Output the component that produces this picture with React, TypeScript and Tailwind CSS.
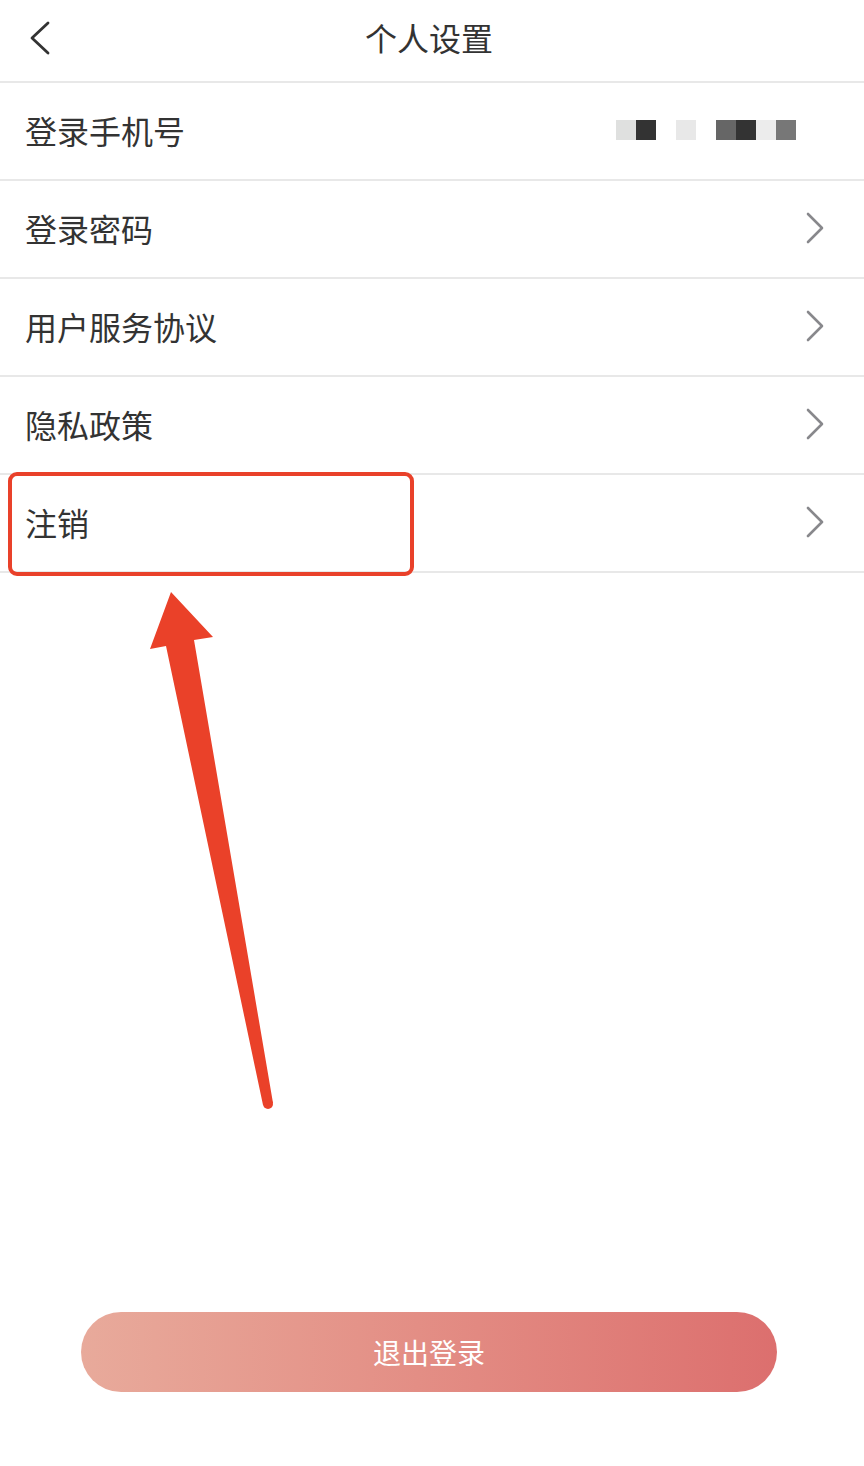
import { ReactNode } from 'react';

const FONT = "font-['Noto_Sans_CJK_SC','Noto_Sans',sans-serif]";

/** Right-pointing chevron used on tappable rows. */
function Chevron() {
  return (
    <svg width="22" height="34" viewBox="0 0 22 34" className="shrink-0">
      <path d="M4 3 L18 17 L4 31" fill="none" stroke="#88888c" strokeWidth="2.6" strokeLinecap="round" strokeLinejoin="round" />
    </svg>
  );
}

/** Pixelated (masked) phone number. */
function MaskedPhone() {
  const blocks = ['#dfe0df', '#333333', 'transparent', '#e8e8e8', 'transparent', '#666666', '#333333', '#ececec', '#777777'];
  return (
    <div className="mr-[30px] flex">
      {blocks.map((c, i) => (
        <span key={i} className="h-5 w-5" style={{ backgroundColor: c }} />
      ))}
    </div>
  );
}

function Row({ label, right }: { label: string; right?: ReactNode }) {
  return (
    <div className="flex h-[98px] items-center justify-between border-b-2 border-[#e8e8e8] pb-[3px] pl-[25px] pr-[38px]">
      <span className="text-[32px] leading-none text-[#333]">{label}</span>
      {right ?? <Chevron />}
    </div>
  );
}

export default function App() {
  return (
    <div className={`relative min-h-[1466px] w-[864px] bg-white ${FONT}`}>
      <header className="relative flex h-[83px] items-center justify-center border-b-2 border-[#e8e8e8] pb-[8px]">
        <svg width="24" height="36" viewBox="0 0 24 36" className="absolute left-[28px] top-[20px]">
          <path d="M20 3 L4 18 L20 33" fill="none" stroke="#333" strokeWidth="2.8" strokeLinecap="round" strokeLinejoin="round" />
        </svg>
        <h1 className="mr-[6px] text-[32px] leading-none text-[#333]">个人设置</h1>
      </header>

      <Row label="登录手机号" right={<MaskedPhone />} />
      <Row label="登录密码" />
      <Row label="用户服务协议" />
      <Row label="隐私政策" />
      <Row label="注销" />

      <div className="mt-[739px] pl-[81px]">
        <button
          type="button"
          className="h-[80px] w-[696px] rounded-full bg-gradient-to-r from-[#e8aa9b] to-[#dc6f6e] text-[28px] text-white"
        >
          退出登录
        </button>
      </div>

      {/* annotation overlay */}
      <div className="pointer-events-none absolute left-[8px] top-[472px] h-[104px] w-[406px] rounded-[9px] border-[4px] border-[#e9412a]" />
      <svg width="864" height="1466" className="pointer-events-none absolute left-0 top-0">
        <polygon
          points="171,592 213,637 194,640 273,1103 263,1105 166,646 150,649"
          fill="#ea4129"
        />
        <circle cx="268" cy="1104" r="5" fill="#ea4129" />
      </svg>
    </div>
  );
}
